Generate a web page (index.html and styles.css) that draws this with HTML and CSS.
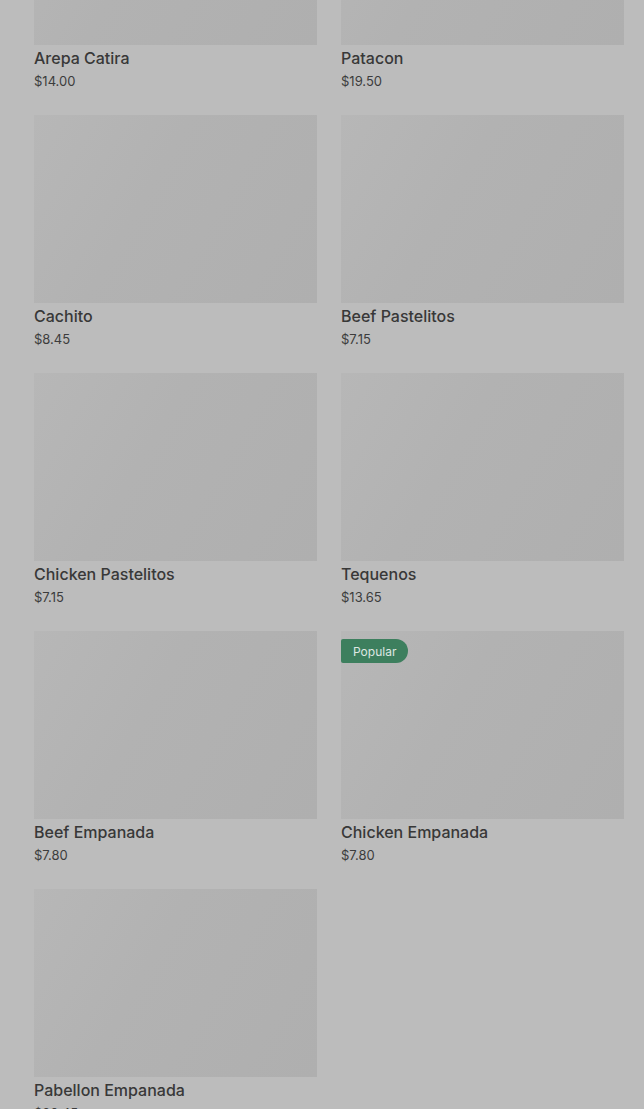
FILE: index.html
```html
<!DOCTYPE html>
<html lang="en">
<head>
<meta charset="utf-8">
<title>Menu</title>
<link rel="stylesheet" href="styles.css">
</head>
<body>
<main class="menu">
  <div class="grid">
    <article class="item">
      <div class="thumb"></div>
      <h3 class="name">Arepa Catira</h3>
      <p class="price">$14.00</p>
    </article>
    <article class="item">
      <div class="thumb"></div>
      <h3 class="name">Patacon</h3>
      <p class="price">$19.50</p>
    </article>
    <article class="item">
      <div class="thumb"></div>
      <h3 class="name">Cachito</h3>
      <p class="price">$8.45</p>
    </article>
    <article class="item">
      <div class="thumb"></div>
      <h3 class="name">Beef Pastelitos</h3>
      <p class="price">$7.15</p>
    </article>
    <article class="item">
      <div class="thumb"></div>
      <h3 class="name">Chicken Pastelitos</h3>
      <p class="price">$7.15</p>
    </article>
    <article class="item">
      <div class="thumb"></div>
      <h3 class="name">Tequenos</h3>
      <p class="price">$13.65</p>
    </article>
    <article class="item">
      <div class="thumb"></div>
      <h3 class="name">Beef Empanada</h3>
      <p class="price">$7.80</p>
    </article>
    <article class="item">
      <div class="thumb"><span class="badge">Popular</span></div>
      <h3 class="name">Chicken Empanada</h3>
      <p class="price">$7.80</p>
    </article>
    <article class="item">
      <div class="thumb"></div>
      <h3 class="name">Pabellon Empanada</h3>
      <p class="price">$20.45</p>
    </article>
  </div>
</main>
</body>
</html>
```

FILE: styles.css
```css
html, body {
  margin: 0;
  padding: 0;
  background: #bcbcbc;
  height: 1109px;
  overflow: hidden;
}

body {
  font-family: "Inter", "Noto Sans", "Liberation Sans", sans-serif;
  color: #383838;
}

.menu {
  padding: 0 20px 0 34px;
}

.grid {
  display: grid;
  grid-template-columns: 1fr 1fr;
  column-gap: 24px;
  row-gap: 25px;
  margin-top: -143px;
}

.item {
  display: flex;
  flex-direction: column;
}

.thumb {
  position: relative;
  height: 188px;
  background: linear-gradient(120deg, #b7b7b7 0%, #b2b2b2 40%, #afafaf 100%);
}

.badge {
  position: absolute;
  top: 8px;
  left: 0;
  height: 24px;
  padding: 0 12px;
  display: flex;
  align-items: center;
  background: #3d7f5e;
  color: #dfe7e2;
  font-size: 12px;
  font-weight: 400;
  border-radius: 2px 12px 12px 2px;
}

.name {
  margin: 3px 0 0;
  font-size: 16px;
  line-height: 20px;
  font-weight: 500;
  color: #383838;
}

.price {
  margin: 4px 0 0;
  font-size: 13px;
  line-height: 18px;
  font-weight: 400;
  color: #3c3c3c;
}
```
